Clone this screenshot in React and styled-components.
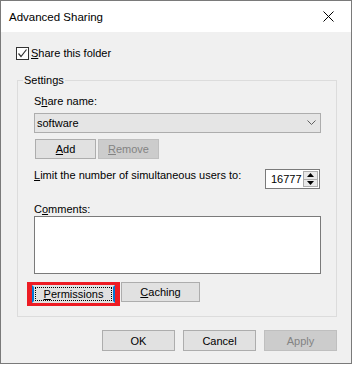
import styled, { createGlobalStyle } from 'styled-components';

const GlobalStyle = createGlobalStyle`
  html, body {
    margin: 0;
    padding: 0;
    background: #ffffff;
  }
  body {
    font-family: "Liberation Sans", Arial, sans-serif;
    font-size: 11px;
    color: #000000;
  }
`;

const Window = styled.div`
  width: 352px;
  height: 364px;
  box-sizing: border-box;
  border: 1px solid #7a7a7a;
  display: flex;
  flex-direction: column;
  background: #f0f0f0;
`;

const TitleBar = styled.div`
  height: 31px;
  flex-shrink: 0;
  display: flex;
  align-items: center;
  justify-content: space-between;
  padding: 2px 0 0 8px;
  box-sizing: border-box;
  background: #ffffff;
`;

const Title = styled.span`
  font-size: 11.5px;
  line-height: 13px;
`;

const CloseButton = styled.div`
  width: 46px;
  height: 29px;
  display: flex;
  align-items: center;
  justify-content: center;
  margin-top: -2px;
`;

const Body = styled.div`
  flex: 1;
  display: flex;
  flex-direction: column;
  padding: 15px 14px 0 15px;
`;

const CheckRow = styled.label`
  display: flex;
  align-items: center;
  gap: 2px;
  height: 13px;
  line-height: 13px;
`;

const CheckBox = styled.span`
  width: 13px;
  height: 13px;
  box-sizing: border-box;
  border: 1px solid #333333;
  background: #ffffff;
  display: flex;
  align-items: center;
  justify-content: center;
`;

const Group = styled.div`
  position: relative;
  width: 320px;
  box-sizing: border-box;
  margin: 20px 0 0 1px;
  border: 1px solid #dcdcdc;
  padding: 14px 15px 10px 16px;
  display: flex;
  flex-direction: column;
`;

const Legend = styled.span`
  position: absolute;
  top: -7px;
  left: 5px;
  padding: 0 1px;
  line-height: 13px;
  background: #f0f0f0;
`;

const FieldLabel = styled.div`
  line-height: 13px;
  margin-top: ${p => p.$top || 0}px;
`;

const Select = styled.div`
  margin-top: 5px;
  height: 20px;
  box-sizing: border-box;
  border: 1px solid #adadad;
  background: #e5e5e5;
  display: flex;
  align-items: center;
  justify-content: space-between;
  padding: 0 4px 0 2px;
  line-height: 13px;
`;

const ButtonRow = styled.div`
  display: flex;
  align-items: flex-start;
  gap: ${p => p.$gap || 2}px;
  margin-top: ${p => p.$top || 0}px;
`;

const Button = styled.button`
  width: ${p => p.$w || 73}px;
  height: ${p => p.$h || 20}px;
  box-sizing: border-box;
  margin: 0;
  padding: 1px 0 0;
  font: inherit;
  line-height: 13px;
  color: #000000;
  background: #e1e1e1;
  border: 1px solid #adadad;
  &:disabled {
    color: #838383;
    background: #cccccc;
    border-color: #bfbfbf;
  }
`;

const LimitRow = styled.div`
  margin-top: 10px;
  display: flex;
  align-items: flex-start;
  justify-content: space-between;
  line-height: 13px;
`;

const Spinner = styled.div`
  width: 55px;
  height: 20px;
  box-sizing: border-box;
  border: 1px solid #7a7a7a;
  background: #ffffff;
  display: flex;
  margin-right: 1px;
`;

const SpinValue = styled.div`
  flex: 1;
  overflow: hidden;
  white-space: nowrap;
  padding-left: 5px;
  line-height: 18px;
`;

const SpinButtons = styled.div`
  width: 16px;
  display: flex;
  flex-direction: column;
  padding: 1px 1px 1px 0;
  box-sizing: border-box;
`;

const SpinArrow = styled.div`
  flex: 1;
  box-sizing: border-box;
  border: 1px solid #adadad;
  border-top-width: ${p => (p.$down ? 0 : 1)}px;
  background: #e8e8e8;
  display: flex;
  align-items: center;
  justify-content: center;
`;

const TextArea = styled.div`
  height: 58px;
  box-sizing: border-box;
  border: 1px solid #7a7a7a;
  background: #ffffff;
`;

const Highlight = styled.div`
  margin-left: -7px;
  width: 93px;
  height: 24px;
  box-sizing: border-box;
  border: 3px solid #ed1c24;
  border-left-width: 5px;
  border-right-width: 5px;
`;

const FocusButton = styled.div`
  height: 100%;
  box-sizing: border-box;
  border: 2px solid #0078d7;
  border-top-color: #e1e1e1;
  border-bottom-color: #e1e1e1;
  background: #e1e1e1;
  padding: 0 1px;
`;

const FocusRing = styled.div`
  height: 100%;
  box-sizing: border-box;
  border: 1px dotted #000000;
  display: flex;
  align-items: center;
  justify-content: center;
  line-height: 13px;
`;

const Footer = styled.div`
  margin-top: 13px;
  display: flex;
  justify-content: flex-end;
  gap: 8px;
`;

const Chevron = () => (
  <svg width="9" height="6" viewBox="0 0 9 6">
    <polyline points="0.5,0.5 4.5,4.5 8.5,0.5" fill="none" stroke="#606060" strokeWidth="1" />
  </svg>
);

const Triangle = ({ down }) => (
  <svg width="7" height="4" viewBox="0 0 7 4">
    <polygon points={down ? '0,0 7,0 3.5,4' : '0,4 7,4 3.5,0'} fill="#000000" />
  </svg>
);

const App = () => {
  return (
    <>
      <GlobalStyle />
      <Window>
        <TitleBar>
          <Title>Advanced Sharing</Title>
          <CloseButton>
            <svg width="11" height="11" viewBox="0 0 11 11">
              <path d="M0.5 0.5 L10.5 10.5 M10.5 0.5 L0.5 10.5" stroke="#000000" strokeWidth="1" />
            </svg>
          </CloseButton>
        </TitleBar>
        <Body>
          <CheckRow>
            <CheckBox>
              <svg width="11" height="11" viewBox="0 0 11 11">
                <polyline points="1.5,5.5 4,8.5 9.5,1.5" fill="none" stroke="#333333" strokeWidth="1.2" />
              </svg>
            </CheckBox>
            <span><u>S</u>hare this folder</span>
          </CheckRow>

          <Group>
            <Legend>Settings</Legend>
            <FieldLabel>S<u>h</u>are name:</FieldLabel>
            <Select>
              <span>software</span>
              <Chevron />
            </Select>
            <ButtonRow $top={6}>
              <Button $w={61} style={{ marginLeft: 1 }}><u>A</u>dd</Button>
              <Button $w={61} disabled><u>R</u>emove</Button>
            </ButtonRow>
            <LimitRow>
              <span><u>L</u>imit the number of simultaneous users to:</span>
              <Spinner>
                <SpinValue>16777</SpinValue>
                <SpinButtons>
                  <SpinArrow><Triangle /></SpinArrow>
                  <SpinArrow $down><Triangle down /></SpinArrow>
                </SpinButtons>
              </Spinner>
            </LimitRow>
            <FieldLabel $top={14}>C<u>o</u>mments:</FieldLabel>
            <TextArea />
            <ButtonRow $top={8} $gap={1}>
              <Highlight>
                <FocusButton>
                  <FocusRing><u>P</u>ermissions</FocusRing>
                </FocusButton>
              </Highlight>
              <Button $w={79}><u>C</u>aching</Button>
            </ButtonRow>
          </Group>

          <Footer>
            <Button $h={21}>OK</Button>
            <Button $h={21}>Cancel</Button>
            <Button $h={21} disabled>Apply</Button>
          </Footer>
        </Body>
      </Window>
    </>
  );
};

export default App;
